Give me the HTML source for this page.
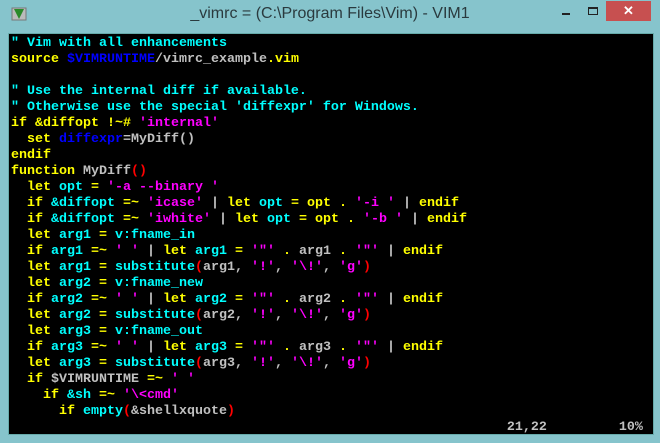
<!DOCTYPE html>
<html><head><meta charset="utf-8"><style>
body{margin:0;width:660px;height:443px;background:#86c4cc;position:relative;overflow:hidden;font-family:"Liberation Sans",sans-serif}
.title{position:absolute;left:0;width:660px;top:5px;text-align:center;font-size:16px;color:#2a3a3e}
.close{position:absolute;left:606px;top:1px;width:45px;height:20px;background:#c75050;color:#fff;text-align:center;font-size:13px;line-height:20px;font-weight:bold}
.min{position:absolute;left:562px;top:13px;width:8px;height:2px;background:#222}
.max{position:absolute;left:588px;top:7px;width:8px;height:5px;border:1px solid #222;border-top-width:2px}
.term{position:absolute;left:8px;top:33px;width:644px;height:400px;background:#000;border:1px solid #6aa}
pre{margin:0;position:absolute;left:2px;top:2px;font-family:"Liberation Mono",monospace;font-weight:bold;font-size:13.33px;line-height:16px;color:#c0c0c0}
.c{color:#0ff}.y{color:#ff0}.m{color:#f0f}.b{color:#0000ff}.r{color:#f00}
</style></head><body>
<svg style="position:absolute;left:10px;top:5px" width="18" height="18" viewBox="0 0 18 18"><rect x="2" y="3" width="14" height="12" fill="#bbb" stroke="#777"/><path d="M4 4h10l-5 10z" fill="#2a8a2a"/></svg>
<div class="title">_vimrc = (C:\Program Files\Vim) - VIM1</div>
<div class="min"></div><div class="max"></div><div class="close">✕</div>
<div class="term"><pre><span class="c">" Vim with all enhancements</span>
<span class="y">source</span> <span class="b">$VIMRUNTIME</span>/vimrc_example<span class="y">.vim</span>

<span class="c">" Use the internal diff if available.</span>
<span class="c">" Otherwise use the special 'diffexpr' for Windows.</span>
<span class="y">if &amp;diffopt !~#</span> <span class="m">'internal'</span>
  <span class="y">set</span> <span class="b">diffexpr</span>=MyDiff()
<span class="y">endif</span>
<span class="y">function</span> MyDiff<span class="r">()</span>
  <span class="y">let</span> <span class="c">opt</span> <span class="y">=</span> <span class="m">'-a --binary '</span>
  <span class="y">if</span> <span class="c">&amp;diffopt</span> <span class="y">=~</span> <span class="m">'icase'</span> | <span class="y">let</span> <span class="c">opt</span> <span class="y">= opt .</span> <span class="m">'-i '</span> | <span class="y">endif</span>
  <span class="y">if</span> <span class="c">&amp;diffopt</span> <span class="y">=~</span> <span class="m">'iwhite'</span> | <span class="y">let</span> <span class="c">opt</span> <span class="y">= opt .</span> <span class="m">'-b '</span> | <span class="y">endif</span>
  <span class="y">let</span> <span class="c">arg1</span> <span class="y">=</span> <span class="c">v:fname_in</span>
  <span class="y">if</span> <span class="c">arg1</span> <span class="y">=~</span> <span class="m">' '</span> | <span class="y">let</span> <span class="c">arg1</span> <span class="y">=</span> <span class="m">'"'</span> <span class="y">.</span> arg1 <span class="y">.</span> <span class="m">'"'</span> | <span class="y">endif</span>
  <span class="y">let</span> <span class="c">arg1</span> <span class="y">=</span> <span class="c">substitute</span><span class="r">(</span>arg1, <span class="m">'!'</span>, <span class="m">'\!'</span>, <span class="m">'g'</span><span class="r">)</span>
  <span class="y">let</span> <span class="c">arg2</span> <span class="y">=</span> <span class="c">v:fname_new</span>
  <span class="y">if</span> <span class="c">arg2</span> <span class="y">=~</span> <span class="m">' '</span> | <span class="y">let</span> <span class="c">arg2</span> <span class="y">=</span> <span class="m">'"'</span> <span class="y">.</span> arg2 <span class="y">.</span> <span class="m">'"'</span> | <span class="y">endif</span>
  <span class="y">let</span> <span class="c">arg2</span> <span class="y">=</span> <span class="c">substitute</span><span class="r">(</span>arg2, <span class="m">'!'</span>, <span class="m">'\!'</span>, <span class="m">'g'</span><span class="r">)</span>
  <span class="y">let</span> <span class="c">arg3</span> <span class="y">=</span> <span class="c">v:fname_out</span>
  <span class="y">if</span> <span class="c">arg3</span> <span class="y">=~</span> <span class="m">' '</span> | <span class="y">let</span> <span class="c">arg3</span> <span class="y">=</span> <span class="m">'"'</span> <span class="y">.</span> arg3 <span class="y">.</span> <span class="m">'"'</span> | <span class="y">endif</span>
  <span class="y">let</span> <span class="c">arg3</span> <span class="y">=</span> <span class="c">substitute</span><span class="r">(</span>arg3, <span class="m">'!'</span>, <span class="m">'\!'</span>, <span class="m">'g'</span><span class="r">)</span>
  <span class="y">if</span> $VIMRUNTIME <span class="y">=~</span> <span class="m">' '</span>
    <span class="y">if</span> <span class="c">&amp;sh</span> <span class="y">=~</span> <span class="m">'\&lt;cmd'</span>
      <span class="y">if</span> <span class="c">empty</span><span class="r">(</span>&amp;shellxquote<span class="r">)</span>
                                                              21,22         10%</pre></div>
</body></html>
